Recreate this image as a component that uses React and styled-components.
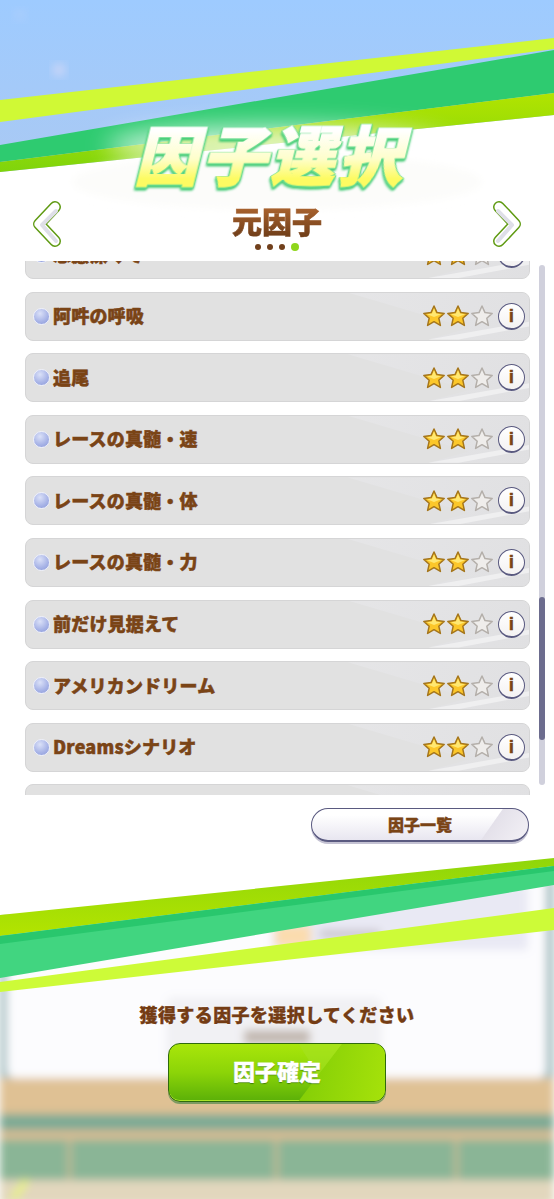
import styled, { createGlobalStyle } from "styled-components"

const GlobalStyle = createGlobalStyle`
    html, body {
        margin: 0;
        padding: 0;
        background: #ffffff;
    }
    * {
        box-sizing: border-box;
    }
`

const FONT = `"Noto Sans CJK JP", "Noto Sans", sans-serif`

const factors = [
    { name: "思慮深くて" },
    { name: "阿吽の呼吸" },
    { name: "追尾" },
    { name: "レースの真髄・速" },
    { name: "レースの真髄・体" },
    { name: "レースの真髄・力" },
    { name: "前だけ見据えて" },
    { name: "アメリカンドリーム" },
    { name: "Dreamsシナリオ" },
    { name: "" },
]

function Backdrop() {
    return (
        <BackdropSvg viewBox="0 0 554 1199" aria-hidden="true">
            <defs>
                <linearGradient id="sky" x1="0" y1="0" x2="0" y2="1">
                    <stop offset="0" stopColor="#9ecbff" />
                    <stop offset="1" stopColor="#aac9f3" />
                </linearGradient>
                <linearGradient id="limeTop" x1="0" y1="0" x2="0" y2="1">
                    <stop offset="0" stopColor="#8fd60a" />
                    <stop offset="1" stopColor="#b3e400" />
                </linearGradient>
                <linearGradient id="limeBottom" x1="0" y1="0" x2="0" y2="1">
                    <stop offset="0" stopColor="#b2e400" />
                    <stop offset="1" stopColor="#7fd40c" />
                </linearGradient>
                <filter id="soft" x="-20%" y="-20%" width="140%" height="140%">
                    <feGaussianBlur stdDeviation="4" />
                </filter>
                <filter id="glow" x="-30%" y="-100%" width="160%" height="300%">
                    <feGaussianBlur stdDeviation="12" />
                </filter>
            </defs>

            <polygon points="0,0 554,0 554,115 0,172" fill="url(#sky)" />
            <circle cx="59" cy="70" r="7" fill="#c4d4f8" filter="url(#soft)" />
            <circle cx="20" cy="15" r="6" fill="#a9cdfd" filter="url(#soft)" />
            <polygon points="0,100 554,38 554,49 0,122" fill="#d0f935" />
            <polygon points="0,145 554,50 554,93 0,162" fill="#2ecb70" />
            <polygon points="0,162 554,93 554,115 0,172" fill="url(#limeBottom)" />
            <ellipse cx="277" cy="146" rx="170" ry="20" fill="#ffffff" opacity="0.75" filter="url(#glow)" />
            <ellipse cx="277" cy="182" rx="205" ry="28" fill="#fcfcfa" filter="url(#soft)" />

            <g filter="url(#soft)">
                <rect x="0" y="880" width="554" height="210" fill="#a3bdc0" />
                <rect x="7" y="860" width="539" height="218" rx="8" fill="#fcfcfe" />
                <rect x="272" y="885" width="256" height="65" fill="#e9e9f4" />
                <rect x="275" y="925" width="36" height="22" fill="#fbdcae" />
                <rect x="320" y="930" width="60" height="8" fill="#c9c4cc" />
                <rect x="166" y="997" width="216" height="70" rx="8" fill="#f1f1f4" />
                <rect x="244" y="1030" width="66" height="14" fill="#c2b8b0" />
                <rect x="0" y="1078" width="554" height="40" fill="#dfc194" />
                <rect x="0" y="1114" width="554" height="16" fill="#7daa95" />
                <rect x="0" y="1130" width="554" height="10" fill="#d5bc94" />
                <rect x="0" y="1140" width="554" height="40" fill="#8ab596" />
                <rect x="68" y="1138" width="3" height="44" fill="#d5bc94" />
                <rect x="275" y="1138" width="3" height="44" fill="#d5bc94" />
                <rect x="455" y="1138" width="3" height="44" fill="#d5bc94" />
                <rect x="0" y="1180" width="554" height="25" fill="#e2d7bd" />
                <polygon points="8,1199 24,1178 30,1182 18,1199" fill="#e6ee8a" />
            </g>

            <polygon points="0,840 554,840 554,858 0,915" fill="#ffffff" />
            <polygon points="0,915 554,858 554,866 0,936" fill="url(#limeTop)" />
            <polygon points="0,936 554,866 554,885 0,978" fill="#41d580" />
            <polygon points="0,936 554,866 554,871 0,944" fill="#29c76d" />
            <polygon points="0,982 554,908 554,930 0,992" fill="#cdfb38" />
        </BackdropSvg>
    )
}

function Chevron({ flip }) {
    return (
        <ChevronSvg viewBox="0 0 30 48" $flip={flip} aria-hidden="true">
            <path
                d="M23 7 L7 24 L23 41"
                fill="none"
                stroke="#5f9a12"
                strokeWidth="12"
                strokeLinecap="round"
                strokeLinejoin="round"
            />
            <path
                d="M23 7 L7 24 L23 41"
                fill="none"
                stroke="#ffffff"
                strokeWidth="9"
                strokeLinecap="round"
                strokeLinejoin="round"
            />
            <path
                d="M24 11 L10 25 L24 41"
                fill="none"
                stroke="#dfdfe8"
                strokeWidth="4"
                strokeLinecap="round"
                strokeLinejoin="round"
            />
        </ChevronSvg>
    )
}

function Star({ filled }) {
    return (
        <StarSvg viewBox="0 0 24 24" aria-hidden="true">
            <path
                d="M12 2 L15 8.6 L22.2 9.4 L16.8 14.2 L18.4 21.4 L12 17.7 L5.6 21.4 L7.2 14.2 L1.8 9.4 L9 8.6 Z"
                fill={filled ? "#fcc72a" : "#efedeb"}
                stroke={filled ? "#a5761c" : "#b4afaa"}
                strokeWidth="1.5"
                strokeLinejoin="round"
            />
            {filled && <path d="M12 4.5 L14 9.6 L19 10.2 L12 13 L5 10.2 L10 9.6 Z" fill="#ffe873" />}
        </StarSvg>
    )
}

function FactorRow({ name }) {
    return (
        <Row>
            <Bullet />
            <Label>{name}</Label>
            <Stars>
                <Star filled />
                <Star filled />
                <Star />
            </Stars>
            <InfoButton>i</InfoButton>
        </Row>
    )
}

export default function App() {
    return (
        <Page>
            <GlobalStyle />
            <Backdrop />

            <Header>
                <Title>因子選択</Title>
            </Header>

            <NavRow>
                <Chevron />
                <NavCenter>
                    <Heading>元因子</Heading>
                    <Dots>
                        <Dot />
                        <Dot />
                        <Dot />
                        <Dot $active />
                    </Dots>
                </NavCenter>
                <Chevron flip />
            </NavRow>

            <ListArea>
                <List>
                    {factors.map((f, i) => (
                        <FactorRow key={i} name={f.name} />
                    ))}
                </List>
                <ScrollTrack>
                    <ScrollThumb />
                </ScrollTrack>
            </ListArea>

            <ListFooter>
                <PillButton>因子一覧</PillButton>
            </ListFooter>

            <Footer>
                <Prompt>獲得する因子を選択してください</Prompt>
                <ConfirmButton>
                    <span>因子確定</span>
                </ConfirmButton>
            </Footer>
        </Page>
    )
}

const Page = styled.div`
    position: relative;
    width: 554px;
    height: 1199px;
    overflow: hidden;
    display: flex;
    flex-direction: column;
    font-family: ${FONT};
    background: #ffffff;
`

const BackdropSvg = styled.svg`
    position: absolute;
    top: 0;
    left: 0;
    width: 554px;
    height: 1199px;
`

const Header = styled.header`
    position: relative;
    height: 197px;
    padding-top: 110px;
    display: flex;
    justify-content: center;
    flex-shrink: 0;
`

const Title = styled.h1`
    margin: 0;
    height: 84px;
    font-size: 64px;
    line-height: 84px;
    font-weight: 900;
    letter-spacing: 4px;
    white-space: nowrap;
    color: transparent;
    -webkit-text-stroke: 1.5px transparent;
    background: linear-gradient(180deg, #ffffff 24%, #fefecb 58%, #fdfb62 82%);
    -webkit-background-clip: text;
    background-clip: text;
    transform: skewX(-14deg);
    filter: drop-shadow(0 1px 0 #6bdc90) drop-shadow(1px 0 0 #6bdc90) drop-shadow(-1px 0 0 #6bdc90)
        drop-shadow(0 2px 1px #3ec971);
`

const NavRow = styled.div`
    position: relative;
    height: 64px;
    padding: 3px 32px 0;
    display: flex;
    justify-content: space-between;
    align-items: flex-start;
    flex-shrink: 0;
`

const ChevronSvg = styled.svg`
    width: 30px;
    height: 48px;
    transform: ${(p) => (p.$flip ? "scaleX(-1)" : "none")};
`

const NavCenter = styled.div`
    display: flex;
    flex-direction: column;
    align-items: center;
`

const Heading = styled.h2`
    margin: 0;
    height: 41px;
    font-size: 30px;
    line-height: 40px;
    font-weight: 900;
    color: transparent;
    -webkit-text-stroke: 0.6px transparent;
    background: linear-gradient(180deg, #a8622e 20%, #73401a 85%);
    -webkit-background-clip: text;
    background-clip: text;
`

const Dots = styled.div`
    display: flex;
    align-items: center;
    gap: 6px;
    margin-top: 2px;
`

const Dot = styled.span`
    width: ${(p) => (p.$active ? "8px" : "6px")};
    height: ${(p) => (p.$active ? "8px" : "6px")};
    border-radius: 50%;
    background: ${(p) => (p.$active ? "#8fd61c" : "#71401c")};
`

const ListArea = styled.div`
    position: relative;
    height: 534px;
    padding-left: 25px;
    overflow: hidden;
    flex-shrink: 0;
`

const List = styled.div`
    width: 505px;
    margin-top: -31px;
    display: flex;
    flex-direction: column;
    gap: 12.6px;
`

const Row = styled.div`
    position: relative;
    height: 49px;
    flex-shrink: 0;
    padding: 0 4px 0 7px;
    display: flex;
    align-items: center;
    border: 1px solid #d5d5d6;
    border-radius: 8px;
    background: #e1e1e1;
    overflow: hidden;

    &::before {
        content: "";
        position: absolute;
        inset: 0;
        background: linear-gradient(120deg, #eeeeef, #e0e0e2);
        clip-path: polygon(64% 0, 100% 0, 100% 100%, 80% 100%, 88% 76%);
    }

    &::after {
        content: "";
        position: absolute;
        inset: 0;
        background: #efeff0;
        clip-path: polygon(80% 100%, 100% 62%, 100% 72%, 86% 100%);
    }
`

const Bullet = styled.span`
    position: relative;
    width: 17px;
    height: 17px;
    margin-right: 3px;
    flex-shrink: 0;
    border-radius: 50%;
    border: 1.5px solid #eef0fb;
    background: radial-gradient(circle at 40% 30%, #dbe1f8, #a6b2e6 60%, #8a98d6);
`

const Label = styled.span`
    position: relative;
    flex: 1;
    top: -1px;
    font-size: 18px;
    line-height: 24px;
    font-weight: 900;
    letter-spacing: 0.2px;
    color: #7a4416;
    -webkit-text-stroke: 0.5px #7a4416;
    white-space: nowrap;
`

const Stars = styled.div`
    position: relative;
    z-index: 1;
    display: flex;
    gap: 0;
    margin-right: 4px;
`

const StarSvg = styled.svg`
    display: block;
    width: 24px;
    height: 24px;
`

const InfoButton = styled.button`
    position: relative;
    z-index: 1;
    width: 27px;
    height: 27px;
    padding: 0;
    flex-shrink: 0;
    border-radius: 50%;
    border: 1.5px solid #5a5a80;
    border-bottom-width: 2.5px;
    background: linear-gradient(180deg, #ffffff, #f4f2f2);
    color: #7a4416;
    font-family: "Liberation Sans", sans-serif;
    font-size: 19px;
    line-height: 22px;
    font-weight: 700;
    text-align: center;
    -webkit-text-stroke: 0.4px #7a4416;
`

const ScrollTrack = styled.div`
    position: absolute;
    top: 4px;
    left: 539px;
    width: 6px;
    height: 520px;
    border-radius: 3px;
    background: #d0d0dc;
`

const ScrollThumb = styled.div`
    position: absolute;
    top: 332px;
    left: 0;
    width: 6px;
    height: 143px;
    border-radius: 3px;
    background: #6c6c8e;
`

const ListFooter = styled.div`
    position: relative;
    padding: 13px 25px 0 0;
    display: flex;
    justify-content: flex-end;
`

const PillButton = styled.button`
    position: relative;
    width: 218px;
    height: 34px;
    padding: 0 0 2px;
    border-radius: 17px;
    border: 1.5px solid #5a5a80;
    border-bottom-width: 2px;
    background:
        linear-gradient(125deg, transparent 80%, #e4e1ea 80.5%, #f3f1f6 100%),
        linear-gradient(180deg, #ffffff 20%, #e8e6f0 100%);
    box-shadow: 0 2px 0 #c4c2d3;
    font-family: ${FONT};
    font-size: 16px;
    line-height: 28px;
    font-weight: 900;
    color: #7a4416;
    -webkit-text-stroke: 0.4px #7a4416;
`

const Footer = styled.div`
    position: relative;
    margin-top: auto;
    padding-bottom: 97px;
    display: flex;
    flex-direction: column;
    align-items: center;
`

const Prompt = styled.p`
    margin: 0 0 15px;
    font-size: 18px;
    line-height: 28px;
    font-weight: 900;
    letter-spacing: 0.4px;
    color: #743c14;
    -webkit-text-stroke: 0.4px #743c14;
    text-shadow: 0 0 2px #ffffff, 0 0 2px #ffffff;
`

const ConfirmButton = styled.button`
    position: relative;
    width: 218px;
    height: 59px;
    padding: 0 0 5px;
    overflow: hidden;
    border-radius: 12px;
    border: 1.5px solid #2f6b0c;
    background: linear-gradient(180deg, #a9e60a 0%, #8cd408 50%, #5bb008 100%);
    box-shadow: 0 2px 0 #7c9a62, inset 0 -1px 0 #a9e62a;
    font-family: ${FONT};
    font-size: 22px;
    line-height: 30px;
    font-weight: 900;
    color: #ffffff;

    &::before {
        content: "";
        position: absolute;
        inset: 0;
        background: linear-gradient(100deg, #4ea606, #7fcb06 55%, #a6e20a);
        clip-path: polygon(80% 0, 100% 0, 100% 100%, 60% 100%);
    }

    &::after {
        content: "";
        position: absolute;
        inset: 0;
        background: #a6e224;
        opacity: 0.55;
        clip-path: polygon(60% 0, 80% 0, 69% 55%);
    }

    span {
        position: relative;
        z-index: 1;
        -webkit-text-stroke: 0.4px #ffffff;
        text-shadow: 0 1px 1px #3f7f08;
    }
`
